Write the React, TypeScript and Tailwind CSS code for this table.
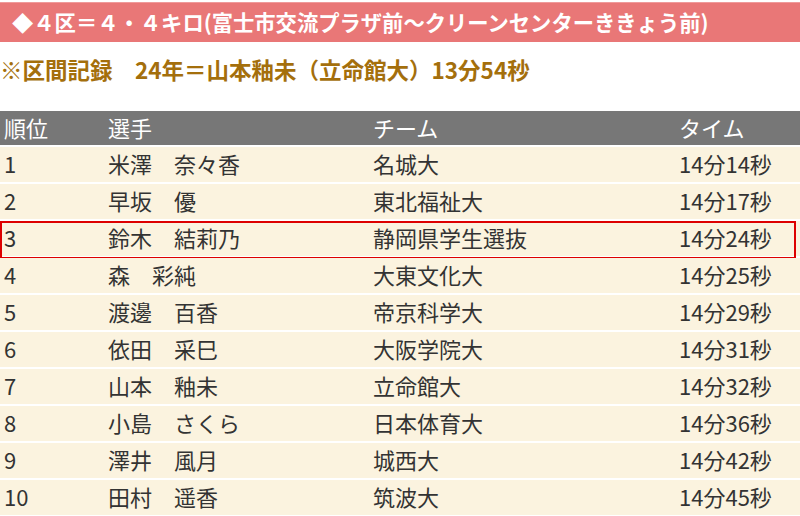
import React from 'react';

type Row = { rank: string; name: string; team: string; time: string; mark?: boolean };

const rows: Row[] = [
  { rank: '1', name: '米澤　奈々香', team: '名城大', time: '14分14秒' },
  { rank: '2', name: '早坂　優', team: '東北福祉大', time: '14分17秒' },
  { rank: '3', name: '鈴木　結莉乃', team: '静岡県学生選抜', time: '14分24秒', mark: true },
  { rank: '4', name: '森　彩純', team: '大東文化大', time: '14分25秒' },
  { rank: '5', name: '渡邊　百香', team: '帝京科学大', time: '14分29秒' },
  { rank: '6', name: '依田　采巳', team: '大阪学院大', time: '14分31秒' },
  { rank: '7', name: '山本　釉未', team: '立命館大', time: '14分32秒' },
  { rank: '8', name: '小島　さくら', team: '日本体育大', time: '14分36秒' },
  { rank: '9', name: '澤井　風月', team: '城西大', time: '14分42秒' },
  { rank: '10', name: '田村　遥香', team: '筑波大', time: '14分45秒' },
];

const cols = 'grid grid-cols-[104px_265px_306px_1fr] items-center pl-[4px] pb-[3px]';

const App: React.FC = () => {
  return (
    <div className="w-[800px] h-[516px] overflow-hidden bg-white pt-[2px] font-['Noto_Sans_CJK_JP',sans-serif]">
      <div className="h-[40px] bg-[#e97777] border-t border-[#f09a9a] flex items-center pl-[12px] pb-[2px] text-white font-bold text-[21.3px] leading-none whitespace-nowrap">
        ◆４区＝４・４キロ(富士市交流プラザ前～クリーンセンターききょう前)
      </div>

      <div className="h-[69px] pt-[11px] text-[22.5px] leading-[32px] font-bold text-[#a46f0c] whitespace-nowrap">
        ※区間記録　24年＝山本釉未（立命館大）13分54秒
      </div>

      <div className="text-[22px] leading-none text-[#333]">
        <div className={`${cols} h-[34px] bg-[#777777] text-white`}>
          <span>順位</span>
          <span>選手</span>
          <span>チーム</span>
          <span>タイム</span>
        </div>
        {rows.map((r) => (
          <div key={r.rank} className={`${cols} relative h-[35px] mt-[2px] bg-[#fbf3df]`}>
            <span>{r.rank}</span>
            <span className="whitespace-nowrap">{r.name}</span>
            <span className="whitespace-nowrap">{r.team}</span>
            <span className="whitespace-nowrap">{r.time}</span>
            {r.mark && (
              <div className="absolute left-0 top-0 right-[4px] h-[38px] border-2 border-[#dd0000]" />
            )}
          </div>
        ))}
      </div>
    </div>
  );
};

export default App;
